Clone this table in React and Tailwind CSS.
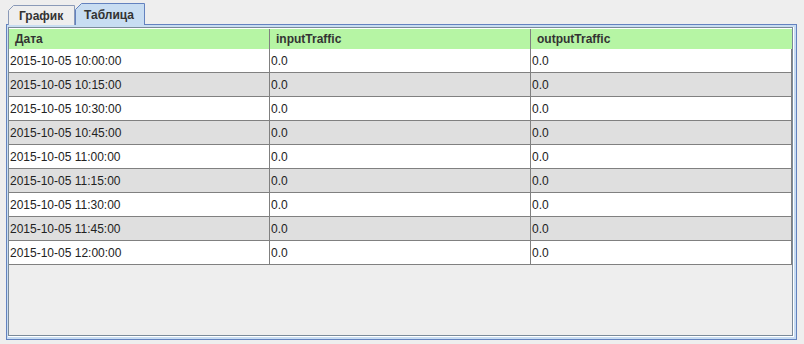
import React from "react";

const rows = [
  "2015-10-05 10:00:00",
  "2015-10-05 10:15:00",
  "2015-10-05 10:30:00",
  "2015-10-05 10:45:00",
  "2015-10-05 11:00:00",
  "2015-10-05 11:15:00",
  "2015-10-05 11:30:00",
  "2015-10-05 11:45:00",
  "2015-10-05 12:00:00",
];

function Tab({ label, selected, className, textClass }) {
  // Metal-style tab: square except the cut top-left corner
  return (
    <div className={"relative " + className}>
      <svg className="absolute inset-0 w-full h-full" preserveAspectRatio="none">
        <polygon
          points={selected ? "0.5,40 0.5,6.5 6.5,0.5 69.5,0.5 69.5,40" : "0.5,40 0.5,5.5 5.5,0.5 66.5,0.5 66.5,40"}
          fill={selected ? "#c8ddf2" : "#eeeeee"}
          stroke={selected ? "#6382bf" : "#8a9ab8"}
          strokeWidth="1"
        />
      </svg>
      <span className={"relative block leading-none " + textClass}>{label}</span>
    </div>
  );
}

export default function App() {
  return (
    <div className="w-[804px] h-[344px] bg-[#eeeeee] pl-[6px] pr-[7px] pb-[4px] flex flex-col font-['Liberation_Sans',Arial,sans-serif] text-[12px] text-[#333333]">
      {/* tabs */}
      <div className="h-[24px] flex items-end pl-[2px] relative z-10 font-bold">
        <Tab label="График" className="w-[67px] h-[20px] mb-[-1px]" textClass="pl-[11px] pt-[5px]" />
        <Tab label="Таблица" selected className="w-[70px] h-[22px] mb-[-1px]" textClass="pl-[9px] pt-[6px]" />
      </div>

      {/* tab content */}
      <div className="flex-1 flex border border-[#6382bf] bg-[#c8ddf2] pt-[2px] pl-px pr-[2px] pb-[2px]">
        <div className="flex-1 flex bg-white pr-px pb-px">
          <div className="flex-1 border border-[#7a8a99] bg-[#eeeeee] flex flex-col">
            <div className="h-[21px] border-t border-white bg-[#b6f5a4] grid grid-cols-[261px_261px_261px] font-bold">
              <div className="border-r border-[#808080] pl-[6px] flex items-center">Дата</div>
              <div className="border-r border-[#808080] pl-[6px] flex items-center">inputTraffic</div>
              <div className="pl-[6px] flex items-center">outputTraffic</div>
            </div>
            {rows.map((d, i) => (
              <div
                key={d}
                className={
                  "h-[24px] border-b border-[#808080] grid grid-cols-[261px_261px_261px] text-[#222222] " +
                  (i % 2 ? "bg-[#dfdfdf]" : "bg-white")
                }
              >
                <div className="border-r border-[#808080] pl-px flex items-center">{d}</div>
                <div className="border-r border-[#808080] pl-px flex items-center">0.0</div>
                <div className="border-r border-[#808080] pl-px flex items-center">0.0</div>
              </div>
            ))}
          </div>
        </div>
      </div>
    </div>
  );
}
